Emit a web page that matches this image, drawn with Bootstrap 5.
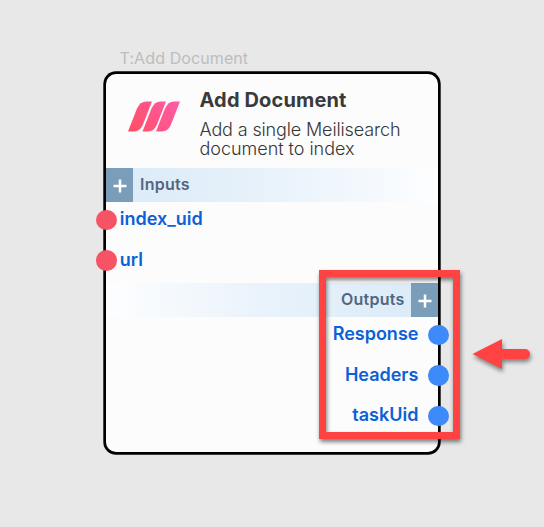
<!DOCTYPE html>
<html lang="en">
<head>
<meta charset="utf-8">
<meta name="viewport" content="width=device-width, initial-scale=1">
<title>Add Document</title>
<link href="https://cdn.jsdelivr.net/npm/bootstrap@5.3.0/dist/css/bootstrap.min.css" rel="stylesheet">
<style>
body{background:#e8e8e8;font-family:Inter,"Liberation Sans",sans-serif;width:544px;height:527px;white-space:nowrap}
.node-wrap{width:332px;margin-left:106px;padding-top:48px}
.node-type{font-size:16px;line-height:20px;height:25.5px;padding-left:13.500px;color:#bdbdbd;letter-spacing:.1px}
.node{height:378px;background:#fcfcfc;border-radius:10px;box-shadow:0 0 0 2.7px #000}
.node>*{flex-shrink:0}
.node-head{height:94.5px;padding:14px 0 0 22px}
.node-logo{width:52px;height:31px;margin:13.500px 19.500px 0 0}
.node-title{font-size:20px;line-height:24px;font-weight:700;color:#3a3a3a;margin-bottom:8px;letter-spacing:.15px}
.node-desc{font-size:18px;line-height:19px;color:#363636;font-weight:300;letter-spacing:-.14px}
.node-desc-end{letter-spacing:-.03px}
.bar{height:34px;font-size:16px;line-height:24px;font-weight:600;color:#52677f;letter-spacing:.25px}
.bar-label{margin:0 6.500px 0 7px;padding-top:4px}
.bar-in{background:linear-gradient(90deg,#d9eaf7,#eaf3fb 55%,#fdfeff)}
.bar-out{background:linear-gradient(270deg,#d9eaf7,#eaf3fb 55%,#fdfeff)}
.add{width:27px;background:#7a9db9;padding-top:2px}
.ports{padding-top:6px;height:81px}
.port{height:40.5px;flex:none;font-size:18px;line-height:22px;font-weight:600;color:#0b61d6}
.dot{width:20.6px;height:20.6px;border-radius:50%;flex:none}
.dot-in{background:#f65365;margin:1.500px 3px 0 -9.8px}
.dot-out{background:#3d8bfb;margin:1.500px -11px 0 10px}
.callout{left:319px;top:270px;width:141px;height:169px;border:7px solid #ff4343;filter:drop-shadow(1px 3px 2px rgba(0,0,0,.5))}
.arrow{left:464px;top:332px;filter:drop-shadow(1px 3px 2px rgba(0,0,0,.45))}
</style>
<script src="https://cdn.jsdelivr.net/npm/bootstrap@5.3.0/dist/js/bootstrap.bundle.min.js"></script>
</head>
<body class="position-relative overflow-hidden">
<main class="node-wrap">
  <div class="node-type">T:Add Document</div>
  <section class="node d-flex flex-column">
    <header class="node-head d-flex align-items-start">
      <svg class="node-logo" viewBox="0 0 52 31" aria-hidden="true">
        <defs><linearGradient id="pink" gradientUnits="userSpaceOnUse" x1="0" y1="31" x2="52" y2="0"><stop offset="0" stop-color="#ff4e62"/><stop offset="1" stop-color="#ff5caa"/></linearGradient></defs>
        <g fill="url(#pink)">
          <path d="M0 30.5 9 7.5Q12 .5 18.5.5H24L15 23.500Q12 30.500 6 30.500Z"/>
          <path d="M14.500 30.500 23.500 7.500Q26.500.5 32.500.5H38L29 23.500Q26 30.500 20 30.500Z"/>
          <path d="M28 30.500 37 7.500Q40 .5 46 .5H52L43 23.500Q40 30.500 34 30.500Z"/>
        </g>
      </svg>
      <div>
        <h1 class="node-title">Add Document</h1>
        <p class="node-desc mb-0">Add a single Meilisearch<br><span class="node-desc-end">document to index</span></p>
      </div>
    </header>
    <div class="bar bar-in d-flex align-items-stretch">
      <span class="add d-flex align-items-center justify-content-center"><svg width="14" height="14" viewBox="0 0 14 14"><path d="M7 .5v13M.5 7h13" stroke="#fff" stroke-width="2.500"/></svg></span>
      <span class="bar-label">Inputs</span>
    </div>
    <div class="ports d-flex flex-column">
      <div class="port d-flex"><span class="dot dot-in"></span><span>index_uid</span></div>
      <div class="port d-flex"><span class="dot dot-in"></span><span>url</span></div>
    </div>
    <div class="bar bar-out d-flex align-items-stretch justify-content-end">
      <span class="bar-label">Outputs</span>
      <span class="add d-flex align-items-center justify-content-center"><svg width="14" height="14" viewBox="0 0 14 14"><path d="M7 .5v13M.5 7h13" stroke="#fff" stroke-width="2.500"/></svg></span>
    </div>
    <div class="ports d-flex flex-column">
      <div class="port d-flex justify-content-end"><span>Response</span><span class="dot dot-out"></span></div>
      <div class="port d-flex justify-content-end"><span>Headers</span><span class="dot dot-out"></span></div>
      <div class="port d-flex justify-content-end"><span>taskUid</span><span class="dot dot-out"></span></div>
    </div>
  </section>
</main>
<div class="callout position-absolute"></div>
<svg class="arrow position-absolute" width="72" height="44" viewBox="0 0 72 44" aria-hidden="true"><path d="M8.500 22 38 7V17H61a5 5 0 0 1 0 10H38V37Z" fill="#ff4343"/></svg>
</body>
</html>
